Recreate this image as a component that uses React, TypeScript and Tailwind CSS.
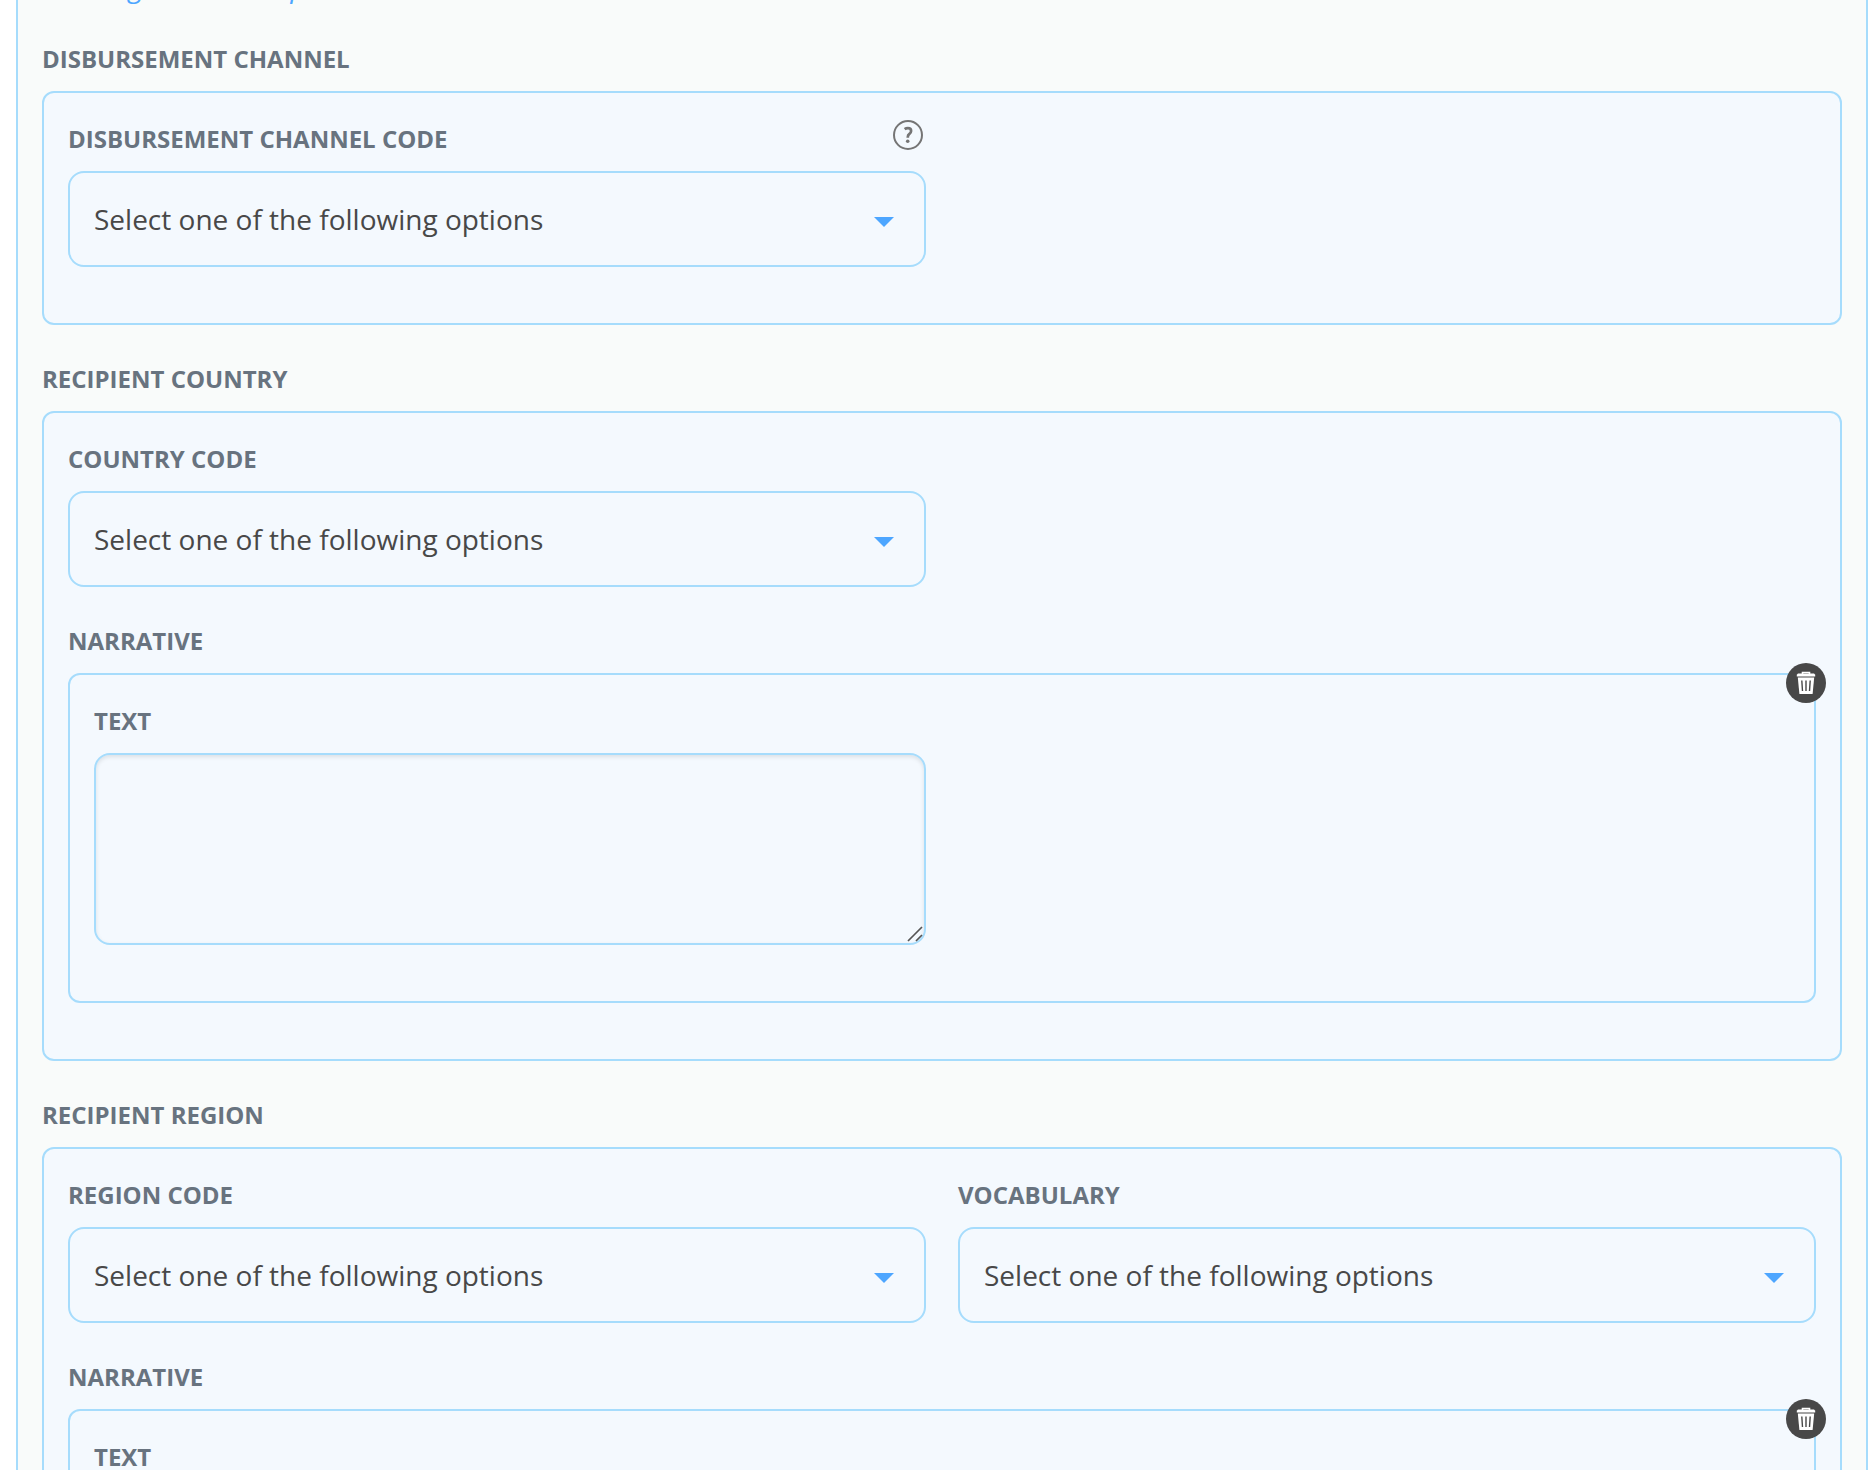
import { useId, type ReactNode } from 'react';

function Label({ htmlFor, children }: { htmlFor?: string; children: ReactNode }) {
  const style = 'block mb-[10px] text-[24px] leading-[44px] font-bold uppercase text-[#68737f]';
  if (htmlFor) {
    return (
      <label htmlFor={htmlFor} className={style}>
        {children}
      </label>
    );
  }
  return <h2 className={style}>{children}</h2>;
}

function HelpButton() {
  return (
    <button type="button" aria-label="Help" className="absolute top-0.5 right-0.5 text-[#757575]">
      <svg width="32" height="32" viewBox="0 0 32 32" fill="none" stroke="currentColor">
        <circle cx="16" cy="16" r="14" strokeWidth="2" />
        <path
          d="M12.6 10.2c1-.7 2-1.100 3.300-1.100 2 0 3.200 1.100 3.200 2.800 0 1.300-.6 2.100-1.700 3-1.200.9-1.600 1.500-1.600 3v.8"
          strokeWidth="2.700"
        />
        <circle cx="15.700" cy="22.200" r="1.800" fill="currentColor" stroke="none" />
      </svg>
    </button>
  );
}

function DeleteButton() {
  return (
    <button
      type="button"
      aria-label="Delete"
      className="absolute -top-3 -right-3 flex size-10 items-center justify-center rounded-full bg-[#484848]"
    >
      <svg width="20" height="24" viewBox="0 0 20 24" fill="none">
        <path d="M6.500 3V1.500h7V3" stroke="#fff" strokeWidth="1.600" />
        <path d="M2 2.600h16l1.200 1.200v1.700H.8V3.800z" fill="#fff" />
        <path d="M1.800 6.600h16.400L16.600 23H3.400z" fill="#fff" />
        <path d="M5.800 9.500l.7 10.500M10 9.500V20M14.200 9.500l-.7 10.500" stroke="#484848" strokeWidth="1.400" />
      </svg>
    </button>
  );
}

function SelectField({ label, help }: { label: string; help?: boolean }) {
  const id = useId();
  return (
    <div className="relative">
      <Label htmlFor={id}>{label}</Label>
      {help && <HelpButton />}
      <div className="relative">
        <select
          id={id}
          className="block h-24 w-full appearance-none rounded-2xl border-2 border-[#a6dcfc] bg-transparent px-6 text-[28px] text-[#484848]"
        >
          <option>Select one of the following options</option>
        </select>
        <svg
          width="20"
          height="10"
          viewBox="0 0 20 10"
          className="pointer-events-none absolute top-[46px] right-8 fill-[#4da6ff]"
        >
          <path d="M0 0h20L10 10z" />
        </svg>
      </div>
    </div>
  );
}

function TextField({ label }: { label: string }) {
  const id = useId();
  return (
    <div>
      <Label htmlFor={id}>{label}</Label>
      <div className="relative">
        <textarea
          id={id}
          className="block h-48 w-full resize-none rounded-2xl border-2 border-[#a6dcfc] bg-transparent px-6 py-4 text-[28px] text-[#484848] shadow-[inset_0_2px_4px_rgba(10,10,10,0.1)]"
        />
        <svg
          width="16"
          height="16"
          viewBox="0 0 16 16"
          className="pointer-events-none absolute right-[3px] bottom-[3px] stroke-[#555]"
          strokeWidth="1.700"
        >
          <path d="M1 15L15 1M9 15l6-6" />
        </svg>
      </div>
    </div>
  );
}

function Section({ title, removable, children }: { title: string; removable?: boolean; children: ReactNode }) {
  return (
    <section>
      <Label>{title}</Label>
      <div className="relative flex flex-col gap-8 rounded-xl border-2 border-[#a6dcfc] bg-[#f4f9fe] px-6 pt-6 pb-14">
        {children}
        {removable && <DeleteButton />}
      </div>
    </section>
  );
}

function Row({ children }: { children: ReactNode }) {
  return <div className="grid grid-cols-2 gap-8">{children}</div>;
}

function Narrative() {
  return (
    <Section title="Narrative" removable>
      <Row>
        <TextField label="Text" />
      </Row>
    </Section>
  );
}

export default function App() {
  return (
    <div className="h-screen overflow-hidden bg-white pr-1 pl-4 font-['Open_Sans',sans-serif]">
      <div className="border-x-2 border-[#a6dcfc] bg-[#f9fbfa] px-6">
        <div className="relative h-[37px]">
          <a href="#" className="absolute bottom-8 left-0 text-[28px] leading-[38px] text-[#4da6ff] italic">
            Add Organisation reporter
          </a>
        </div>
        <div className="flex flex-col gap-8">
          <Section title="Disbursement Channel">
            <Row>
              <SelectField label="Disbursement Channel Code" help />
            </Row>
          </Section>
          <Section title="Recipient Country">
            <Row>
              <SelectField label="Country Code" />
            </Row>
            <Narrative />
          </Section>
          <Section title="Recipient Region">
            <Row>
              <SelectField label="Region Code" />
              <SelectField label="Vocabulary" />
            </Row>
            <Narrative />
          </Section>
        </div>
      </div>
    </div>
  );
}
